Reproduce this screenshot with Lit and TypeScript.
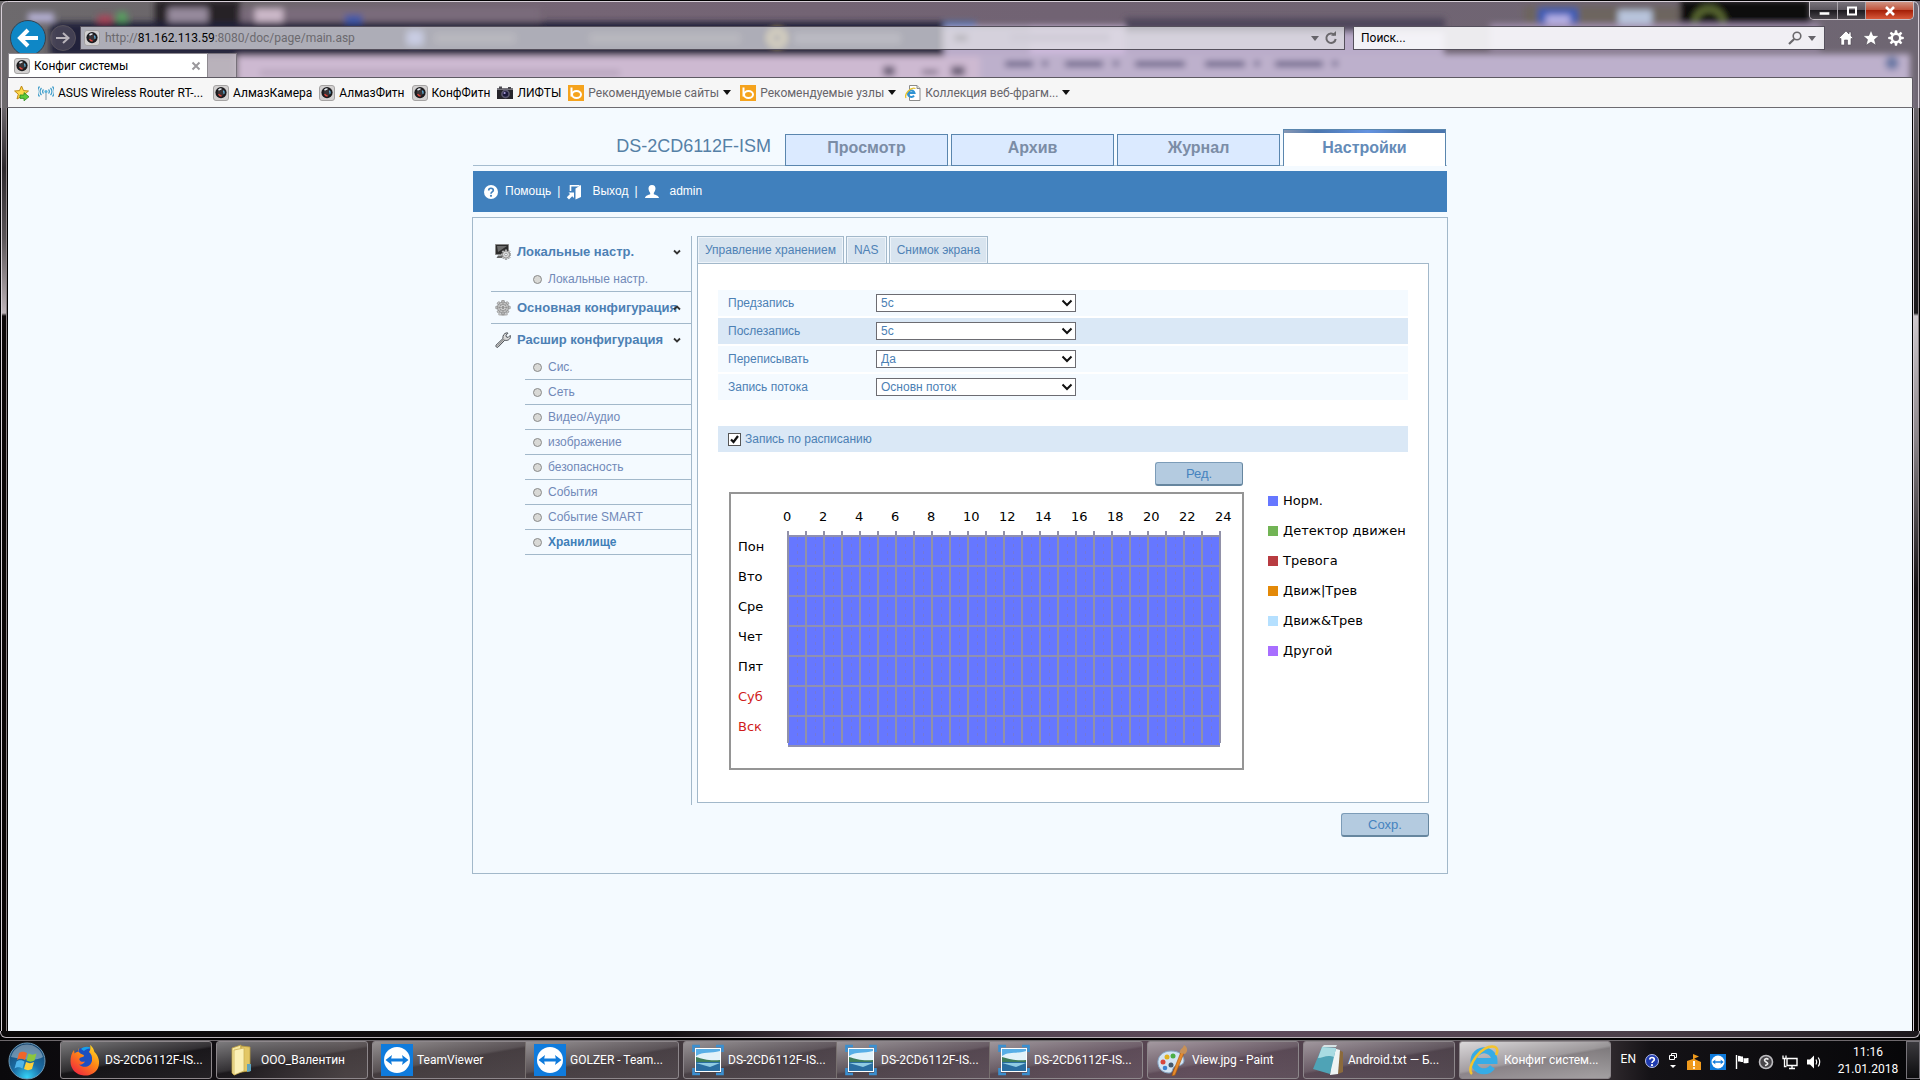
import { LitElement, html, svg, css, nothing } from "lit";
import { customElement } from "lit/decorators.js";
import { classMap } from "lit/directives/class-map.js";

/* ---------- icons ---------- */

const camera = html`<svg class="i16" viewBox="0 0 16 16" aria-hidden="true">
  <rect x=".5" y=".5" width="15" height="15" rx="2.5" fill="#d3d1d1" stroke="#a5a3a3" />
  <circle cx="8" cy="7.6" r="5.6" fill="#1b1b1e" />
  <circle cx="8" cy="7.6" r="3.4" fill="#3a3436" />
  <path d="M5.5 5.2a3.6 3.6 0 0 1 3-1.2" stroke="#e8eef4" stroke-width="1.4" fill="none" />
  <path d="M10.4 5.6a3.4 3.4 0 0 1 .4 3.2" stroke="#5fb2dc" stroke-width="1.3" fill="none" />
  <path d="M5.6 9.2a3.4 3.4 0 0 0 3 1.8" stroke="#d8453a" stroke-width="1.4" fill="none" />
</svg>`;

const favStar = html`<svg class="i16" viewBox="0 0 16 16" aria-hidden="true">
  <path d="M7.5 1l2 4.6 5 .4-3.8 3.2 1.2 4.8-4.4-2.6L3 14l1.3-4.8L.6 6l4.9-.4z" fill="#ffd94a" stroke="#c08a14" />
  <path d="M6 10h4V7.6l5 4.2-5 4V13.400H6z" fill="#5ecb3c" stroke="#2c8a1e" stroke-width=".8" />
</svg>`;

const wifi = html`<svg class="i16" viewBox="0 0 16 16" aria-hidden="true">
  <g fill="none" stroke="#3f9cc9" stroke-width="1.2">
    <path d="M3.500 3a5 5 0 0 0 0 7M1.500 1.500a7.500 7.500 0 0 0 0 10M5.500 4.500a3 3 0 0 0 0 4" />
    <path d="M12.500 3a5 5 0 0 1 0 7M14.500 1.500a7.500 7.500 0 0 1 0 10M10.500 4.500a3 3 0 0 1 0 4" />
    <path d="M8 7v8" stroke="#8fa6b4" />
  </g>
  <circle cx="8" cy="6.500" r="1.600" fill="#5ab4dc" />
</svg>`;

const movieCam = html`<svg class="i16" viewBox="0 0 16 16" aria-hidden="true">
  <path d="M0 3h16v11H0z" fill="#26252b" />
  <path d="M0 3h16v2H0z" fill="#77757c" />
  <path d="M2 1.500h3V4H2zM11 2h3v2h-3z" fill="#4a4950" />
  <circle cx="8.500" cy="9" r="4.400" fill="#5c5a70" />
  <circle cx="8.500" cy="9" r="2.800" fill="#1c1a3c" />
  <circle cx="7.600" cy="8" r="1.100" fill="#a99ad8" />
</svg>`;

const bing = html`<svg class="i16" viewBox="0 0 16 16" aria-hidden="true">
  <path d="M0 0h16v16H0z" fill="#f5a31d" />
  <path d="M3.500 2.500v9" stroke="#fff" stroke-width="2" />
  <ellipse cx="8.500" cy="9.500" rx="4.500" ry="3.500" fill="none" stroke="#fff" stroke-width="2" />
</svg>`;

const iePage = html`<svg class="i16" viewBox="0 0 16 16" aria-hidden="true">
  <path d="M4.500.5H12l3 3v12H4.500z" fill="#fff" stroke="#8b8b8b" />
  <path d="M12 .5v3h3" fill="#ddd" stroke="#8b8b8b" />
  <path d="M3 8h6.500A3.300 3.300 0 1 0 9 10.600" fill="none" stroke="#2f93d3" stroke-width="2" />
  <path d="M1 13C-1 9 6 1.500 10.500 3.500" fill="none" stroke="#e8c22d" stroke-width="1.300" />
</svg>`;

const downTri = html`<svg class="tri" viewBox="0 0 8 5" aria-hidden="true"><path d="M0 0h8L4 5z" fill="currentColor" /></svg>`;

const chevron = (up: boolean) => html`<svg class="chev" viewBox="0 0 8 6" aria-hidden="true">
  <path d=${up ? "M1 4.500L4 1.500 7 4.500" : "M1 1.500L4 4.500 7 1.500"} fill="none" stroke="#333" stroke-width="1.800" />
</svg>`;

const teamViewer = (cls: string) => html`<svg class=${cls} viewBox="0 0 32 32" aria-hidden="true">
  <path d="M0 0h32v32H0z" fill="#0f7bdc" />
  <circle cx="16" cy="16" r="13" fill="#fff" />
  <path d="M4.500 16l6.500-5-.8 3.500h11.600L21 11l6.500 5-6.500 5 .8-3.500H10.200L11 21z" fill="#0f7bdc" />
</svg>`;

const firefox = html`<svg class="i32" viewBox="0 0 32 32" aria-hidden="true">
  <defs>
    <linearGradient id="ff" x1=".9" y1="0" x2=".2" y2="1">
      <stop offset="0" stop-color="#ffe226" /><stop offset=".45" stop-color="#ff8a16" /><stop offset="1" stop-color="#f0243f" />
    </linearGradient>
  </defs>
  <circle cx="16" cy="15" r="11.500" fill="#1d4fc0" />
  <path d="M12 5c3-3 9-3 11 0-3-1-6 0-8 2z" fill="#18a0e8" />
  <path d="M21 1c4 3 4 6 4.500 7 4 4 6 10 3.500 16-3 6-9 8-14 7.500C7 31 1.500 25 1.500 17.500 1.500 13 2.500 9 5 6l.5 3.500C7 8 9 7.500 10 8l-.5-4c-1 3 1 5.500 4 6.500 2 .5 2 2 0 2.500-3 .5-3.500 2-3 3 1 2 3.500 2 5.500 1.500-1 2.500-4 3.500-6 3 4 4 12 3 13-4 .6-4-1-7-3-8.500 1.500-2 1.800-4.500 1-7z" fill="url(#ff)" />
</svg>`;

const folder = html`<svg class="i32" viewBox="0 0 32 32" aria-hidden="true">
  <path d="M7 4l9-3v26l-7 4-2-2z" fill="#f6e7a0" stroke="#b99c3f" stroke-width=".8" />
  <path d="M16 2l9 1v24l-9 1z" fill="#e3c765" stroke="#b99c3f" stroke-width=".8" />
  <path d="M9 6l10-2v23L9 31z" fill="#fbf0b6" stroke="#cdb257" stroke-width=".8" />
  <path d="M22 20h4v7l-4 1z" fill="#5fa3bd" />
</svg>`;

const picture = html`<svg class="i32" viewBox="0 0 32 32" aria-hidden="true">
  <path d="M3 4h26v24H3z" fill="#fff" />
  <path d="M4 5h24v12H4z" fill="#58aee6" />
  <path d="M4 12c7-5 15-2 24-5v10H4z" fill="#e2f2f9" />
  <path d="M4 13c7 2 13 4 24 3v3H4z" fill="#3f7d5b" />
  <path d="M4 18h24v9H4z" fill="#2a6ea0" />
  <path d="M4 19h24l-10 4z" fill="#8fcbe2" />
  <path d="M1.500 8V2H8M24 2h6.500v6M30.500 24v6H24M8 30H1.500v-6" fill="none" stroke="#3a8fd0" stroke-width="2.600" />
</svg>`;

const paint = html`<svg class="i32" viewBox="0 0 32 32" aria-hidden="true">
  <path d="M15 7C6 7 1 13 2 20c1 6 6 9 11 9 4 0 3-4 5-6s9 0 10-6C28 10 22 7 15 7z" fill="#d3e4f3" stroke="#86a5c4" />
  <circle cx="11" cy="13" r="2.500" fill="#e0b021" /><circle cx="17" cy="12" r="2.500" fill="#4cae46" />
  <circle cx="7" cy="18" r="2.500" fill="#d8463c" /><circle cx="9" cy="24" r="2.300" fill="#3f83d0" />
  <circle cx="15" cy="21" r="2.500" fill="#44586d" />
  <path d="M25 8l3 1-9 22-3 1 1-4z" fill="#e58a2b" stroke="#a4560f" stroke-width=".6" />
  <path d="M24 9c-1-4 3-4 4-8 4 2 4 7 1 9z" fill="#c79158" />
</svg>`;

const notepad = html`<svg class="i32" viewBox="0 0 32 32" aria-hidden="true">
  <path d="M27 6l4 2v20l-5 2z" fill="#8b6a3c" />
  <path d="M21 4l7 2-2 24-8 1z" fill="#eef4f4" />
  <path d="M10 3l14 1-6 26L1 25z" fill="#4fa3b6" />
  <path d="M10 3l14 1-2 9C15 10 11 14 6 14z" fill="#a8dbe2" />
  <path d="M10 3h14l1-2H12z" fill="#d8e2e4" />
</svg>`;

const ieBig = html`<svg class="i32" viewBox="0 0 32 32" aria-hidden="true">
  <path d="M7 17h19.500a10.500 10.500 0 1 0-2 6" fill="none" stroke="#37ace6" stroke-width="6" />
  <path d="M4 30C-3 24 14-1 27 3c4 2 2 6 1 8" fill="none" stroke="#f3c32e" stroke-width="2.500" />
</svg>`;

const startOrb = html`<svg class="orb" viewBox="0 0 38 38" aria-hidden="true">
  <defs>
    <radialGradient id="orb" cx=".5" cy=".95" r=".9">
      <stop offset="0" stop-color="#35d3f7" /><stop offset=".45" stop-color="#1b6ea6" /><stop offset="1" stop-color="#16456e" />
    </radialGradient>
  </defs>
  <circle cx="19" cy="19" r="18" fill="url(#orb)" stroke="#6d9ab8" />
  <path d="M3 15a16.500 16.500 0 0 1 32 0c-8 5-20 2-32 0z" fill="#fff" opacity=".35" />
  <path d="M11 11c3-2 5-1.500 8 0l-2 7c-3-1.500-5-2-8 0z" fill="#f0652a" />
  <path d="M20.500 11.500c3 1.500 5 1.500 8 0l-2 7c-3 1.500-5 1.500-8 0z" fill="#8cc63e" />
  <path d="M8.500 19.500c3-2 5-1.500 8 0l-2 7c-3-1.500-5-2-8 0z" fill="#4fb4ea" />
  <path d="M18 20c3 1.500 5 1.500 8 0l-2 7c-3 1.500-5 1.500-8 0z" fill="#fdd03a" />
</svg>`;

const help = html`<svg class="i16" viewBox="0 0 16 16" aria-hidden="true">
  <circle cx="8" cy="8" r="7" fill="#fff" />
  <path d="M5.700 6.500C5.700 3.500 10.300 3.600 10.300 6.200 10.300 8 8 7.800 8 9.800" fill="none" stroke="#4080bd" stroke-width="1.700" />
  <circle cx="8" cy="11.800" r="1.100" fill="#4080bd" />
</svg>`;

const exit = html`<svg class="i16" viewBox="0 0 16 16" aria-hidden="true">
  <path d="M4.500 7V1.800h9" fill="none" stroke="#fff" stroke-width="1.600" />
  <path d="M9.500 4.500L15 1v12l-5.500 2.500z" fill="#fff" />
  <path d="M2.500 8.500H8V14L6.200 12.200 3 15.500.8 13.300 4 10z" fill="#fff" />
</svg>`;

const user = html`<svg class="i16" viewBox="0 0 16 16" aria-hidden="true">
  <path d="M8 1c2.500 0 3.500 1.600 3.500 3.600C11.500 6.500 10.500 8 9.800 9v1.300c1.500.7 4.700 1.200 5.200 3.700H1c.5-2.500 3.700-3 5.200-3.700V9C5.500 8 4.500 6.500 4.500 4.600 4.500 2.600 5.500 1 8 1z" fill="#fff" />
</svg>`;

const gearTeeth = [0, 45, 90, 135, 180, 225, 270, 315];

const localIcon = html`<svg class="i16" viewBox="0 0 16 16" aria-hidden="true">
  <path d="M.5.5h13v10H.5z" fill="#2c2c2c" stroke="#8a8a8a" />
  <path d="M2 2h10L3 8z" fill="#6c6c6c" />
  <path d="M3 11.500h5v2.500H1.500z" fill="#666" />
  <g transform="translate(11 10.500)" fill="#d9d9d9" stroke="#666" stroke-width=".5">
    ${gearTeeth.map((a) => svg`<path d="M-1.200-3l.4-2h1.600l.4 2z" transform="rotate(${a})" />`)}
    <circle r="3.500" />
    <circle r="1.300" fill="#f5faff" />
  </g>
</svg>`;

const gearIcon = html`<svg class="i16" viewBox="0 0 16 16" aria-hidden="true">
  <ellipse cx="8" cy="14.500" rx="5" ry="1.200" fill="#b8b8b8" />
  <g transform="translate(8 7.500)" fill="#c6c6c6" stroke="#858585" stroke-width=".7">
    ${gearTeeth.map((a) => svg`<path d="M-1.600-5l.5-2.200h2.200l.5 2.200z" transform="rotate(${a})" />`)}
    <circle r="5.400" />
    <circle r="3.300" fill="#e4e4e4" />
    <circle r="1.300" fill="#999" />
    ${gearTeeth.map((a) => svg`<path d="M0-2v-2.500" transform="rotate(${a})" />`)}
  </g>
</svg>`;

const wrench = html`<svg class="i16" viewBox="0 0 16 16" aria-hidden="true">
  <path d="M1 13.200L8 6.500C7.400 4 9 1 12 .8l1 .4-2 2 .4 1.800 1.800.4 2-2 .3 1C15.400 7.500 12.500 9 9.800 8.200L3 15.200c-1.200.6-2.800-.8-2-2z" fill="#dcdcdc" stroke="#4a4f55" />
  <path d="M2.500 13.800l7-7" stroke="#777" />
</svg>`;

/* ---------- data ---------- */

const bookmarks = [
  { icon: wifi, text: "ASUS Wireless Router RT-...", first: true },
  { icon: camera, text: "АлмазКамера" },
  { icon: camera, text: "АлмазФитн" },
  { icon: camera, text: "КонфФитн" },
  { icon: movieCam, text: "ЛИФТЫ" },
  { icon: bing, text: "Рекомендуемые сайты", menu: true },
  { icon: bing, text: "Рекомендуемые узлы", menu: true },
  { icon: iePage, text: "Коллекция веб-фрагм...", menu: true },
];

const mainTabs = ["Просмотр", "Архив", "Журнал", "Настройки"];
const contentTabs = ["Управление хранением", "NAS", "Снимок экрана"];
const subItems = ["Сис.", "Сеть", "Видео/Аудио", "изображение", "безопасность", "События", "Событие SMART", "Хранилище"];

const fields = [
  { id: "pre", label: "Предзапись", value: "5с" },
  { id: "post", label: "Послезапись", value: "5с" },
  { id: "over", label: "Переписывать", value: "Да" },
  { id: "stream", label: "Запись потока", value: "Основн поток" },
];

const hours = Array.from({ length: 13 }, (_, i) => i * 2);
const days = ["Пон", "Вто", "Сре", "Чет", "Пят", "Суб", "Вск"];
const legend = [
  ["Норм.", "#6677ff"],
  ["Детектор движен", "#72b455"],
  ["Тревога", "#b83c41"],
  ["Движ|Трев", "#e38908"],
  ["Движ&Трев", "#b5e0ff"],
  ["Другой", "#a86eff"],
];

const tasks = [
  [{ icon: firefox, text: "DS-2CD6112F-IS..." }],
  [{ icon: folder, text: "OOO_Валентин" }],
  [{ icon: teamViewer("i32"), text: "TeamViewer" }, { icon: teamViewer("i32"), text: "GOLZER - Team..." }],
  [{ icon: picture, text: "DS-2CD6112F-IS..." }, { icon: picture, text: "DS-2CD6112F-IS..." }, { icon: picture, text: "DS-2CD6112F-IS..." }],
  [{ icon: paint, text: "View.jpg - Paint" }],
  [{ icon: notepad, text: "Android.txt — Б..." }],
  [{ icon: ieBig, text: "Конфиг систем...", active: true }],
];

const base = css`
  * { box-sizing: border-box; }
  button { font: inherit; color: inherit; background: none; border: 0; padding: 0; margin: 0; }
  a { color: inherit; text-decoration: none; }
  svg { display: block; flex: none; }
  .i16 { width: 16px; height: 16px; }
  .tri { width: 8px; height: 5px; }
`;

/* ---------- browser frame ---------- */

@customElement("browser-chrome")
export class BrowserChrome extends LitElement {
  static styles = [
    base,
    css`
      :host { display: block; position: relative; font: 12px/16px Roboto, "Noto Sans", sans-serif; color: #000; overflow: hidden; }
      .glass { position: absolute; inset: 0; width: 100%; height: 100%; z-index: -1; }
      .caption { display: flex; justify-content: flex-end; height: 20px; padding: 2px 6px 0 0; }
      .win { display: flex; border: 1px solid #c5c0c6; border-top: 0; border-radius: 0 0 5px 5px; overflow: hidden; }
      .win button { width: 28px; display: grid; place-items: center; border-right: 1px solid #aaa5ab; background: linear-gradient(#77727a, #5c575f 45%, #1c1a1f 50%, #4a464c); }
      .win button.x { width: 47px; border-right: 0; background: linear-gradient(#d09483, #c2553d 45%, #a52008 50%, #d8593a); }
      .nav { display: flex; align-items: center; height: 36px; padding: 0 15px 0 10px; }
      .nav > * { flex: none; }
      .back { width: 36px; height: 36px; border-radius: 50%; background: #0f87c6; border: 1px solid #37424e; display: grid; place-items: center; }
      .fwd { width: 26px; height: 26px; margin: 0 4px; border-radius: 50%; border: 1px solid #57525c; background: rgba(130, 120, 130, .35); display: grid; place-items: center; }
      .box { display: flex; align-items: center; height: 24px; border: 1px solid #55505c; padding: 0 6px 0 3px; color: #66646a; }
      .nav .url { flex: 1; min-width: 0; gap: 5px; background: rgba(222, 222, 226, .74); }
      .nav .search { flex: 0 1 472px; margin-left: 8px; gap: 6px; padding: 0 8px 0 7px; background: rgba(250, 250, 252, .9); }
      .addr { flex: 1; color: #6b696e; white-space: nowrap; }
      .addr b { font-weight: 400; color: #000; }
      .search input { flex: 1; min-width: 0; border: 0; background: none; padding: 0; font: inherit; outline: 0; }
      .search input::placeholder { color: #000; opacity: 1; }
      .tools { display: flex; gap: 7px; margin-left: 12px; }
      .tabs { display: flex; height: 24px; margin-top: -3px; padding-left: 8px; position: relative; }
      .tab { display: flex; align-items: center; gap: 4px; width: 200px; height: 24px; padding: 0 6px 0 5px; background: #fff; border: 1px solid #8e8a90; border-bottom: 0; }
      .tab span { flex: 1; }
      .newtab { width: 29px; border: 1px solid #77717a; border-left: 0; border-bottom: 0; background: rgba(205, 198, 208, .8); }
      .fav { display: flex; align-items: center; height: 31px; margin: 0 7px; padding: 0 6px; background: #f6f6f6; border: 1px solid #5d5962; border-bottom-color: #6d6b70; border-radius: 2px 2px 0 0; white-space: nowrap; }
      .bm { display: flex; align-items: center; gap: 4px; height: 24px; margin-left: 7px; }
      .bm.first { margin: 0 3px 0 8px; }
      .bm.m { color: #66646a; }
      .bm.m .tri { color: #111; }
      .bm.m + .bm.m { margin-left: 9px; }
    `,
  ];

  render() {
    return html`
      <svg class="glass" viewBox="0 0 1920 108" preserveAspectRatio="none" aria-hidden="true">
        <defs>
          <filter id="b" x="-20%" y="-50%" width="140%" height="200%"><feGaussianBlur stdDeviation="3" /></filter>
          <linearGradient id="g" x2="1"><stop offset="0" stop-color="#6d6a6d" /><stop offset=".1" stop-color="#6b666a" /><stop offset=".3" stop-color="#756575" /><stop offset=".55" stop-color="#716373" /><stop offset="1" stop-color="#6e6672" /></linearGradient>
        </defs>
        <path d="M0 0h1920v108H0z" fill="url(#g)" />
        <g filter="url(#b)">
          <path d="M155 0h85v26h-85z" fill="#252226" /><path d="M240 8h300v14H240z" fill="#7a6c7c" />
          <path d="M50 22h894v34H50z" fill="#24213a" />
          <path d="M944 26h500v84H944z" fill="#b9abc9" /><path d="M1030 26h95v30h-95z" fill="#cdb9dc" />
          <path d="M944 22h32v5h-32z" fill="#4a74b8" />
          <path d="M1125 18h320v14h-320z" fill="#50465c" />
          <path d="M237 56h743v60H237z" fill="#cdb9d1" /><path d="M980 54h930v60H980z" fill="#bdb0cc" />
          <path d="M28 13h26v9H28z" fill="#b5b0d4" /><path d="M98 15h14v8H98z" fill="#a8465a" /><path d="M117 12h10v10h-10z" fill="#58a060" />
          <path d="M255 8h28v14h-28z" fill="#cbb7c8" /><path d="M345 15h17v9h-17z" fill="#4058a8" /><path d="M168 8h40v14h-40z" fill="#968a9c" />
          <path d="M1524 6h155v20h-155z" fill="#6d655e" /><path d="M1538 8h40v16h-40z" fill="#3b5bb6" /><path d="M1546 15h24v14h-24z" fill="#b6b0e6" />
          <path d="M1618 10h34v16h-34z" fill="#b8c4dc" /><path d="M1680 0h130v24h-130z" fill="#0b0a0b" />
          <circle cx="1709" cy="23" r="14" fill="none" stroke="#67783a" stroke-width="5" />
          <path d="M1490 24h330v26h-330z" fill="#a18fae" />
          <path d="M408 32h14v12h-14z" fill="#8d9be6" /><path d="M435 34h80v9h-80zM590 34h150v9H590z" fill="#4b4959" />
          <circle cx="777" cy="38" r="7" fill="none" stroke="#d9c166" stroke-width="4" /><path d="M795 34h105v9H795z" fill="#56546a" />
          <path d="M954 34h14v8h-14z" fill="#514658" /><path d="M1010 33h100v9h-100z" fill="#a698b8" />
          <path d="M260 70h360v6H260z" fill="#b7a5bd" />
          <path d="M883 66h12v10h-12zM922 70h16v4h-16zM951 66h14v10h-14z" fill="#6d6078" />
          <path d="M1005 61h28v6h-28zM1042 61h6v5h-6zM1065 61h38v6h-38zM1113 61h6v5h-6zM1135 61h50v6h-50zM1205 61h40v6h-40zM1254 61h6v5h-6zM1275 61h48v6h-48zM1332 61h6v5h-6z" fill="#6c6389" />
          <circle cx="1892" cy="63" r="7" fill="#6c79a4" />
        </g>
        <path d="M0 0h1920v1H0z" fill="#000" />
        <path d="M1.500 108V8q0-6.500 6-6.500h1905q6 0 6 6.500v100" fill="none" stroke="#d7cfd8" />
      </svg>
      <div class="caption">
        <div class="win">
          <button aria-label="Свернуть"><svg width="12" height="12" viewBox="0 0 12 12"><path d="M1.500 7h10v3h-10z" fill="#fff" stroke="#444" stroke-width=".5" /></svg></button>
          <button aria-label="Развернуть"><svg width="12" height="12" viewBox="0 0 12 12"><path d="M2 2.500h8v7H2z" fill="none" stroke="#fff" stroke-width="2" /></svg></button>
          <button class="x" aria-label="Закрыть"><svg width="12" height="12" viewBox="0 0 12 12"><path d="M2 2l8 8M10 2l-8 8" stroke="#fff" stroke-width="2.600" /></svg></button>
        </div>
      </div>
      <div class="nav">
        <button class="back" aria-label="Назад"><svg width="24" height="24" viewBox="0 0 24 24"><path d="M22 12H5M12 4l-8 8 8 8" fill="none" stroke="#fff" stroke-width="4" /></svg></button>
        <button class="fwd" aria-label="Вперед"><svg width="16" height="16" viewBox="0 0 16 16"><path d="M1 8h12M8 3l5.500 5L8 13" fill="none" stroke="#b9b4bb" stroke-width="2" /></svg></button>
        <div class="box url">
          ${camera}
          <span class="addr">http://<b>81.162.113.59</b>:8080/doc/page/main.asp</span>
          <button aria-label="Журнал адресов">${downTri}</button>
          <button aria-label="Обновить"><svg width="14" height="14" viewBox="0 0 14 14"><path d="M10.500 4A4.700 4.700 0 1 0 11.700 8" fill="none" stroke="#6a686c" stroke-width="2" /><path d="M7 4.800h5V0z" fill="#6a686c" /></svg></button>
        </div>
        <div class="box search">
          <input type="text" aria-label="Поиск" placeholder="Поиск..." />
          <button aria-label="Найти"><svg width="14" height="14" viewBox="0 0 14 14"><circle cx="9" cy="5" r="3.800" fill="none" stroke="#6a686c" stroke-width="1.600" /><path d="M6.200 8L1 13" stroke="#6a686c" stroke-width="2.200" /></svg></button>
          ${downTri}
        </div>
        <div class="tools">
          <button aria-label="Домой"><svg width="18" height="18" viewBox="0 0 18 18"><path d="M9 2L1.500 9.500H4V16h3.500v-5h3v5H14V9.500h2.500L14 7V3h-2v2z" fill="#fff" stroke="#514c56" stroke-width=".6" /></svg></button>
          <button aria-label="Избранное"><svg width="18" height="18" viewBox="0 0 18 18"><path d="M9 1l2.200 5.500 5.800.3-4.500 3.800 1.500 5.700L9 13.100l-5 3.200 1.500-5.700L1 6.800l5.800-.3z" fill="#fff" stroke="#514c56" stroke-width=".6" /></svg></button>
          <button aria-label="Сервис"><svg width="18" height="18" viewBox="0 0 18 18"><g transform="translate(9 9)">${gearTeeth.map((a) => svg`<path d="M-1.500-5l.4-2.800h2.200L1.500-5z" fill="#fff" transform="rotate(${a})" />`)}<circle r="4.200" fill="none" stroke="#fff" stroke-width="2.400" /></g></svg></button>
        </div>
      </div>
      <div class="tabs">
        <div class="tab">${camera}<span>Конфиг системы</span>
          <button aria-label="Закрыть вкладку"><svg width="10" height="10" viewBox="0 0 10 10"><path d="M1.500 1.500l7 7M8.500 1.500l-7 7" stroke="#9a989c" stroke-width="2" /></svg></button>
        </div>
        <button class="newtab" aria-label="Новая вкладка"></button>
      </div>
      <nav class="fav">
        <button aria-label="Добавить в избранное">${favStar}</button>
        ${bookmarks.map((b) => html`<a href="#" class=${classMap({ bm: true, first: !!b.first, m: !!b.menu })}>${b.icon}<span>${b.text}</span>${b.menu ? downTri : nothing}</a>`)}
      </nav>
    `;
  }
}

/* ---------- weekly schedule ---------- */

@customElement("schedule-chart")
export class ScheduleChart extends LitElement {
  static styles = [
    base,
    css`
      :host { display: flex; gap: 24px; font: 13px/32px Verdana, "DejaVu Sans", sans-serif; color: #000; }
      .frame { width: 515px; border: 2px solid #959595; padding: 9px 7px 21px; }
      .hours { display: grid; grid-template-columns: repeat(13, 36px); margin-left: 45px; line-height: 28px; }
      .body { display: flex; }
      .days { width: 49px; }
      .days div { height: 30px; }
      .red { color: #d01c1c; }
      .grid { width: 436px; height: 216px; }
      ul { list-style: none; margin: -6px 0 0; padding: 0; }
      li { display: flex; align-items: center; gap: 5px; height: 30px; white-space: nowrap; }
      .sw { width: 10px; height: 10px; flex: none; }
    `,
  ];

  render() {
    const cell = 18;
    const line = Array.from({ length: 25 }, (_, i) => 1 + i * cell);
    return html`
      <div class="frame">
        <div class="hours">${hours.map((h) => html`<span>${h}</span>`)}</div>
        <div class="body">
          <div class="days">${days.map((d, i) => html`<div class=${classMap({ red: i > 4 })}>${d}</div>`)}</div>
          <svg class="grid" viewBox="0 0 436 216" role="img" aria-label="Расписание">
            <path d="M1 4h432v210H1z" fill="#6677ff" />
            ${line.slice(0, 24).map((x) => svg`<path d="M${x + 9.5} 6V212" stroke="#7378d8" stroke-dasharray="3 4" />`)}
            ${line.map((x) => svg`<path d="M${x} 0V212" stroke="#9191a8" stroke-width="2" />`)}
            ${Array.from({ length: 8 }, (_, i) => svg`<path d="M1 ${5 + i * 30}H433" stroke="#9090b0" stroke-width="2" />`)}
          </svg>
        </div>
      </div>
      <ul>${legend.map(([t, c]) => html`<li><span class="sw" style="background:${c}"></span>${t}</li>`)}</ul>
    `;
  }
}

/* ---------- camera settings page ---------- */

@customElement("camera-page")
export class CameraPage extends LitElement {
  static styles = [
    base,
    css`
      :host { display: block; flex: 1; background: #f4faff; font: 12px/16px "Liberation Sans", Arial, sans-serif; color: #4c80b4; padding: 21px 16px 24px; }
      .wrap { width: 976px; max-width: 100%; margin: 0 auto; }
      .head { display: flex; align-items: flex-end; justify-content: flex-end; gap: 3px; height: 37px; margin: 0 1px; border-bottom: 1px solid #a5bccf; }
      .model { font-size: 18px; line-height: 20px; color: #5580a6; margin-right: 11px; padding-bottom: 9px; }
      .mt { width: 163px; height: 32px; margin-bottom: -1px; border: 1px solid #5a86ae; background: #dbeaff; color: #7b8da6; font: bold 16px/24px "Liberation Sans", Arial, sans-serif; padding-bottom: 4px; }
      .mt.on { height: 37px; background: linear-gradient(90deg, #8797b4, #4b76ae 20%, #6493e0 52%, #4b76ae 80%) top / 100% 3px no-repeat #fff; border-bottom: 0; color: #648bb8; padding-bottom: 0; margin-right: 1px; }
      .bar { display: flex; align-items: center; height: 41px; margin: 5px 1px 5px; padding: 0 10px 2px; background: #4080bd; color: #fff; }
      .bar a { display: flex; align-items: center; }
      .bar .i16 { margin-top: 2px; }
      .bar a.help { gap: 6px; }
      .bar a.out { gap: 10px; }
      .bar i { font-style: normal; margin: 0 6px; }
      .panel { display: flex; border: 1px solid #a2b8ca; padding: 18px 18px 35px; min-height: 657px; }
      .side { width: 201px; height: 569px; border-right: 1px solid #a2b8ca; }
      .side h3 { display: flex; align-items: center; gap: 6px; margin: 0; height: 31px; padding-left: 4px; font-size: 13px; white-space: nowrap; position: relative; }
      .chev { width: 8px; height: 6px; position: absolute; right: 10px; }
      .sec { border-bottom: 1px solid #a2b8ca; }
      .sec.s1 { height: 56px; }
      .sec.s2 { height: 32px; }
      .sub { display: flex; align-items: center; gap: 6px; height: 24px; padding-left: 42px; color: #7189b8; }
      .dot { width: 9px; height: 9px; border-radius: 50%; border: 1px solid #8a8a8a; background: #d9d9d6; }
      .list { padding-left: 34px; }
      .list .sub { height: 25px; padding-left: 8px; border-bottom: 1px solid #a2b8ca; }
      .list .sub.on { font-weight: 700; color: #3f7fb8; }
      .main { flex: 1; margin-left: 5px; min-width: 0; }
      .ctabs { display: flex; gap: 2px; position: relative; z-index: 1; }
      .ctabs button { height: 27px; padding: 0 7px; border: 1px solid #a2b8ca; border-bottom: 0; background: #d8e4ef; box-shadow: inset 0 0 0 1px #eef4fa; color: #4f82b5; white-space: nowrap; }
      .content { height: 540px; border: 1px solid #a2b8ca; background: #fff; padding: 26px 20px 0; }
      .row { display: flex; align-items: center; height: 26px; margin-bottom: 2px; padding-left: 10px; background: #f4faff; }
      .row.alt { background: #dae8f6; }
      .row label { width: 148px; }
      .row.chk { margin-top: 26px; margin-bottom: 10px; }
      .row.chk label { width: auto; margin-left: 4px; }
      select { appearance: none; width: 200px; height: 18px; padding: 0 4px; border: 1px solid #6c6c72; border-radius: 0; color: inherit; font: inherit; background: #fff; }
      .sel { display: grid; align-items: center; position: relative; }
      .sel svg { position: absolute; right: 3px; width: 12px; height: 8px; pointer-events: none; }
      input[type="checkbox"] { appearance: none; width: 13px; height: 13px; margin: 0; border: 1px solid #555; background: #fff; display: grid; place-items: center; }
      .box { position: relative; display: grid; place-items: center; }
      .box svg { position: absolute; width: 11px; height: 11px; pointer-events: none; }
      .btn { width: 88px; height: 24px; border: 1px solid #7c9cb8; border-bottom: 2px solid #66869f; border-right-color: #66869f; border-radius: 3px; background: #b4cbe0; color: #4583bf; font-size: 13px; }
      .edit { display: flex; padding-left: 437px; margin-bottom: 6px; }
      schedule-chart { margin-left: 11px; }
      .save { display: flex; justify-content: flex-end; padding-top: 10px; }
    `,
  ];

  render() {
    const sub = (t: string, on = false) => html`<a href="#" class=${classMap({ sub: true, on })}><span class="dot"></span>${t}</a>`;
    return html`
      <div class="wrap">
        <header class="head">
          <div class="model">DS-2CD6112F-ISM</div>
          ${mainTabs.map((t, i) => html`<button class=${classMap({ mt: true, on: i === 3 })}>${t}</button>`)}
        </header>
        <div class="bar">
          <a href="#" class="help">${help}Помощь</a><i>|</i><a href="#" class="out">${exit}Выход</a><i>|</i><a href="#" class="out">${user}admin</a>
        </div>
        <div class="panel">
          <nav class="side">
            <div class="sec s1"><h3>${localIcon}Локальные настр.${chevron(false)}</h3>${sub("Локальные настр.")}</div>
            <div class="sec s2"><h3>${gearIcon}Основная конфигурация${chevron(true)}</h3></div>
            <h3>${wrench}Расшир конфигурация${chevron(false)}</h3>
            <div class="list">${subItems.map((t, i) => sub(t, i === 7))}</div>
          </nav>
          <main class="main">
            <div class="ctabs">${contentTabs.map((t) => html`<button>${t}</button>`)}</div>
            <section class="content">
              ${fields.map((f, i) => html`<div class=${classMap({ row: true, alt: i === 1 })}>
                <label for=${f.id}>${f.label}</label>
                <span class="sel"><select id=${f.id}><option>${f.value}</option></select>
                  <svg viewBox="0 0 12 8"><path d="M1.500 1.500L6 6l4.500-4.500" fill="none" stroke="#111" stroke-width="2" /></svg></span>
              </div>`)}
              <div class="row alt chk">
                <span class="box"><input type="checkbox" id="sched" checked /><svg viewBox="0 0 11 11"><path d="M2 5.500L4.500 8 9 2" fill="none" stroke="#111" stroke-width="2.200" /></svg></span>
                <label for="sched">Запись по расписанию</label>
              </div>
              <div class="edit"><button class="btn">Ред.</button></div>
              <schedule-chart></schedule-chart>
            </section>
            <div class="save"><button class="btn">Сохр.</button></div>
          </main>
        </div>
      </div>
    `;
  }
}

/* ---------- taskbar ---------- */

@customElement("task-bar")
export class TaskBar extends LitElement {
  static styles = [
    base,
    css`
      :host { display: flex; height: 39px; font: 12px/16px Roboto, "Noto Sans", sans-serif; color: #fff; border-top: 1px solid #6d686c; background: linear-gradient(90deg, #0a090c 0, #120f13 12%, #3c3436 18%, #433a40 40%, #5a4654 62%, #4a3d47 74%, #3a3236 83%, #141216 86%, #060608 100%); }
      .i32 { width: 32px; height: 32px; }
      .orb { width: 38px; height: 38px; }
      .start { margin: 0 14px 0 8px; }
      .tasks { display: flex; gap: 4px; flex: 1; min-width: 0; }
      .grp { display: flex; border: 1px solid #8d878b; border-radius: 3px; height: 38px; overflow: hidden; }
      .t { display: flex; align-items: center; gap: 4px; width: 150px; padding-left: 8px; white-space: nowrap; text-align: left; background: linear-gradient(170deg, rgba(255, 255, 255, .45), rgba(255, 255, 255, .14) 48%, rgba(255, 255, 255, .04) 52%, rgba(255, 255, 255, .08)); }
      .multi .t { width: 152px; }
      .multi .t + .t { border-left: 1px solid #77706f; width: 153px; }
      .t.on { background: linear-gradient(170deg, rgba(255, 255, 255, .8), rgba(255, 255, 255, .5) 48%, rgba(255, 255, 255, .38) 52%, rgba(255, 255, 255, .55)); }
      .tray { display: flex; align-items: center; gap: 8px; }
      .tray .lang { padding-bottom: 4px; }
      .tray .i16 { margin-top: 2px; }
      .clock { text-align: center; line-height: 17px; width: 72px; margin: 0 2px 0 2px; }
      .show { width: 14px; height: 38px; border: 1px solid #77747a; background: linear-gradient(#3b3a3e, #0c0c0e); }
    `,
  ];

  render() {
    return html`
      <button class="start" aria-label="Пуск">${startOrb}</button>
      <div class="tasks">
        ${tasks.map((g) => html`<div class=${classMap({ grp: true, multi: g.length > 1 })}>${g.map((t: any) => html`<button class=${classMap({ t: true, on: !!t.active })}>${t.icon}<span>${t.text}</span></button>`)}</div>`)}
      </div>
      <div class="tray">
        <span class="lang">EN</span>
        <svg class="i16" viewBox="0 0 16 16"><circle cx="8" cy="7" r="6.500" fill="#1f3bb0" stroke="#b9c2ea" /><path d="M5.800 5.600C5.800 2.800 10.300 2.900 10.300 5.400 10.300 7.200 8 7 8 9" fill="none" stroke="#fff" stroke-width="1.700" /><circle cx="8" cy="11.200" r="1.100" fill="#fff" /></svg>
        <svg width="10" height="18" viewBox="0 0 10 18"><path d="M1.500 3.500h5v4h-5zM3.500 3V1.500h5v4H7" fill="none" stroke="#fff" /><path d="M2 13h6l-3 3z" fill="#fff" /></svg>
        <svg class="i16" viewBox="0 0 16 16"><path d="M1 7l6-2V0l6 2.500L8.500 4.500V5L15 8v8H1z" fill="#f09a1c" /><path d="M8 7v5" stroke="#fff" stroke-width="2" /><circle cx="8" cy="14" r="1.100" fill="#fff" /></svg>
        ${teamViewer("i16")}
        <svg class="i16" viewBox="0 0 16 16"><path d="M2.500 1v14" stroke="#fff" stroke-width="1.400" /><path d="M4 2c2-1 3 1 5 .5V8C7 8.500 6 7 4 7.500zM9.500 4c2 1 3-.5 5 0v5c-2-.5-3 1-5 0z" fill="#fff" /></svg>
        <svg class="i16" viewBox="0 0 16 16"><circle cx="8" cy="8" r="6.500" fill="#48464a" stroke="#bdbcc0" stroke-width="1.600" /><path d="M10.500 5.500C8 3.500 5 6 7.500 7.500s3.500 3-.5 4" fill="none" stroke="#eee" stroke-width="1.600" /></svg>
        <svg class="i16" viewBox="0 0 16 16"><path d="M5 4.500h10v7H5zM10 12v2M7 14.500h6" fill="none" stroke="#fff" stroke-width="1.400" /><path d="M1 1.500v3h3v-3M2.500 4.500v8h2" fill="none" stroke="#fff" stroke-width="1.300" /></svg>
        <svg class="i16" viewBox="0 0 16 16"><path d="M1 5.500h3L8 1.500v13L4 10.500H1z" fill="#fff" /><path d="M10 5.500q1.500 2.500 0 5M12.200 3.500q3 4.500 0 9" fill="none" stroke="#fff" stroke-width="1.200" /></svg>
        <div class="clock">11:16<br />21.01.2018</div>
      </div>
      <button class="show" aria-label="Свернуть все окна"></button>
    `;
  }
}

@customElement("app-root")
export class AppRoot extends LitElement {
  static styles = css`
    :host { display: flex; flex-direction: column; min-height: 100vh; background: #000; isolation: isolate; }
    .mid { flex: 1; display: flex; }
    .edge { width: 8px; flex: none; border: 1px solid #000; border-width: 0 1px; box-sizing: border-box; box-shadow: inset 1px 0 #d6cfd6, inset -1px 0 #8a8284; background: linear-gradient(#69656a, #2c282c 60px, #5a5558 130px, #bdb4b8 205px, #0c0808 208px, #080404); }
    .edge.r { background: linear-gradient(#69656a, #2c282c 120px, #1a181a 205px, #cfc9cd 208px, #8c868a 330px, #141012 480px, #080404); }
    .foot { height: 7px; box-sizing: border-box; border: 1px solid #b9b2b8; border-top: 0; border-radius: 0 0 6px 6px; margin-bottom: 2px; background: linear-gradient(90deg, #0a0909 0, #141013 35%, #4c3f4a 45%, #5f4b5c 65%, #4b3f49 85%, #1b171b); }
  `;

  render() {
    return html`
      <browser-chrome></browser-chrome>
      <div class="mid"><div class="edge"></div><camera-page></camera-page><div class="edge r"></div></div>
      <div class="foot"></div>
      <task-bar></task-bar>
    `;
  }
}
